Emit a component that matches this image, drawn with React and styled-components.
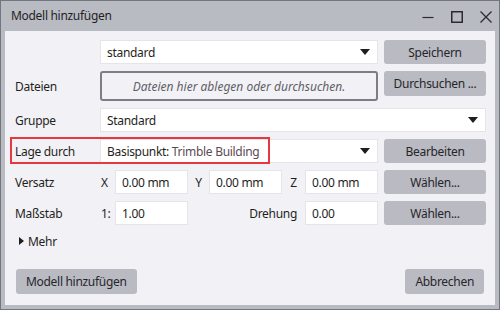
import React from "react";
import styled, { createGlobalStyle } from "styled-components";

const Global = createGlobalStyle`
  html, body { margin: 0; padding: 0; background: #b9bbc3; }
  body {
    font-family: "Noto Sans", "Open Sans", sans-serif;
    font-size: 12px;
    letter-spacing: -0.3px;
    color: #222;
  }
`;

const Caret = () => (
  <svg width="10" height="6" viewBox="0 0 10 6">
    <path d="M0 0 L10 0 L5 6 Z" fill="#1e1e1e" />
  </svg>
);

const App = () => (
  <>
    <Global />
    <Window>
      <TitleBar>
        <Title>Modell hinzufügen</Title>
        <Controls>
          <svg width="12" height="12" viewBox="0 0 12 12">
            <line x1="0.5" y1="6.5" x2="11.5" y2="6.5" stroke="#2b2b2f" strokeWidth="1.2" />
          </svg>
          <svg width="12" height="12" viewBox="0 0 12 12">
            <rect x="0.75" y="0.75" width="10.5" height="10.5" fill="none" stroke="#2b2b2f" strokeWidth="1.5" />
          </svg>
          <svg width="12" height="12" viewBox="0 0 12 12">
            <path d="M0.5 0.5 L11.5 11.5 M11.5 0.5 L0.5 11.5" stroke="#2b2b2f" strokeWidth="1.3" />
          </svg>
        </Controls>
      </TitleBar>

      <Body>
        <Row>
          <span />
          <Select>standard<Caret /></Select>
          <Button>Speichern</Button>
        </Row>

        <Row $tall>
          <Label>Dateien</Label>
          <DropZone>Dateien hier ablegen oder durchsuchen.</DropZone>
          <Button $top>Durchsuchen ...</Button>
        </Row>

        <Row>
          <Label>Gruppe</Label>
          <Select $wide>Standard<Caret /></Select>
        </Row>

        <Row>
          <Highlight />
          <Label>Lage durch</Label>
          <Select>
            <span>Basispunkt: <Muted>Trimble Building</Muted></span>
            <Caret />
          </Select>
          <Button>Bearbeiten</Button>
        </Row>

        <Row>
          <Label>Versatz</Label>
          <Coords>
            <Axis>X</Axis>
            <Input>0.00 mm</Input>
            <Axis $center>Y</Axis>
            <Input>0.00 mm</Input>
            <Axis $center>Z</Axis>
            <Input>0.00 mm</Input>
          </Coords>
          <Button>Wählen...</Button>
        </Row>

        <Row>
          <Label>Maßstab</Label>
          <Coords>
            <Axis>1:</Axis>
            <Input>1.00</Input>
            <Rotation>Drehung</Rotation>
            <Input>0.00</Input>
          </Coords>
          <Button>Wählen...</Button>
        </Row>

        <More>
          <svg width="5" height="8" viewBox="0 0 5 8">
            <path d="M0 0 L5 4 L0 8 Z" fill="#1e1e1e" />
          </svg>
          Mehr
        </More>

        <Footer>
          <Button $pad>Modell hinzufügen</Button>
          <Button $pad>Abbrechen</Button>
        </Footer>
      </Body>
    </Window>
  </>
);

export default App;

const Window = styled.div`
  width: 500px;
  height: 310px;
  box-sizing: border-box;
  border: 1px solid #74767d;
  background: #b9bbc3;
  padding: 0 4px 4px 4px;
  display: flex;
  flex-direction: column;
`;

const TitleBar = styled.div`
  height: 30px;
  display: flex;
  align-items: center;
  justify-content: space-between;
  padding-left: 6px;
`;

const Title = styled.div`
  font-size: 12px;
  color: #1f1f22;
  margin-top: -1px;
`;

const Controls = styled.div`
  display: flex;
  align-items: center;
  gap: 17px;
  margin-right: 3px;
  margin-top: 2px;

  svg { display: block; }
`;

const Body = styled.div`
  flex: 1;
  background: #f2f2f6;
  padding: 9px 9px 11px 10px;
  display: flex;
  flex-direction: column;
  gap: 7px;
`;

const Row = styled.div`
  position: relative;
  display: grid;
  grid-template-columns: 79px 278px 102px;
  column-gap: 6px;
  height: ${(p) => (p.$tall ? "30px" : "24px")};
  align-items: center;
`;

const Label = styled.div`
  color: #1f1f22;
  position: relative;
`;

const Highlight = styled.div`
  position: absolute;
  left: -5px;
  top: -2px;
  width: 260px;
  height: 27px;
  box-sizing: border-box;
  border: 2px solid #e6383f;
  pointer-events: none;
  z-index: 2;
`;

const Select = styled.div`
  grid-column: ${(p) => (p.$wide ? "2 / 4" : "auto")};
  height: 24px;
  box-sizing: border-box;
  background: #fff;
  border: 1px solid #e4e4ea;
  display: flex;
  align-items: center;
  justify-content: space-between;
  padding: 0 7px 0 6px;
  color: #1f1f22;
`;

const Muted = styled.span`
  color: #5b4955;
`;

const Button = styled.div`
  height: ${(p) => (p.$pad || p.$top ? "25px" : "24px")};
  align-self: ${(p) => (p.$top ? "start" : "center")};
  box-sizing: border-box;
  background: #b9bac2;
  border-radius: 3px;
  display: flex;
  align-items: center;
  justify-content: center;
  white-space: nowrap;
  padding: ${(p) => (p.$pad ? "0 10px" : "0")};
  color: #26262a;
`;

const DropZone = styled.div`
  height: 30px;
  box-sizing: border-box;
  border: 2px solid #7c7d85;
  border-radius: 3px;
  display: flex;
  align-items: center;
  justify-content: center;
  font-style: italic;
  letter-spacing: 0;
  color: #5e5f68;
`;

const Coords = styled.div`
  display: grid;
  grid-template-columns: 15px 73px 21px 73px 23px 73px;
  align-items: center;
  height: 24px;
`;

const Axis = styled.div`
  text-align: ${(p) => (p.$center ? "center" : "left")};
  padding-left: ${(p) => (p.$center ? "0" : "1px")};
  color: #1f1f22;
`;

const Rotation = styled.div`
  grid-column: 3 / 6;
  text-align: right;
  padding-right: 8px;
  color: #1f1f22;
`;

const Input = styled.div`
  height: 24px;
  box-sizing: border-box;
  background: #fff;
  border: 1px solid #e4e4ea;
  display: flex;
  align-items: center;
  padding-left: 6px;
  color: #1f1f22;
`;

const More = styled.div`
  height: 18px;
  display: flex;
  align-items: center;
  gap: 4px;
  padding-left: 4px;
  color: #1f1f22;
`;

const Footer = styled.div`
  margin-top: auto;
  display: flex;
  justify-content: space-between;
  padding: 0 2px 0 1px;
`;
